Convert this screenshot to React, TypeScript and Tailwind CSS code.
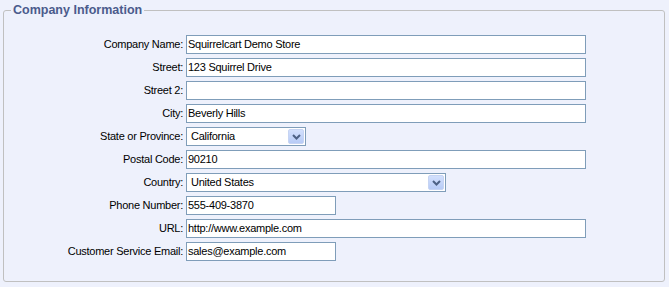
import React from "react";

type Field = {
  label: string;
  value: string;
  width: string;
  select?: boolean;
};

const fields: Field[] = [
  { label: "Company Name:", value: "Squirrelcart Demo Store", width: "w-[400px]" },
  { label: "Street:", value: "123 Squirrel Drive", width: "w-[400px]" },
  { label: "Street 2:", value: "", width: "w-[400px]" },
  { label: "City:", value: "Beverly Hills", width: "w-[400px]" },
  { label: "State or Province:", value: "California", width: "w-[120px]", select: true },
  { label: "Postal Code:", value: "90210", width: "w-[400px]" },
  { label: "Country:", value: "United States", width: "w-[260px]", select: true },
  { label: "Phone Number:", value: "555-409-3870", width: "w-[150px]" },
  { label: "URL:", value: "http://www.example.com", width: "w-[400px]" },
  { label: "Customer Service Email:", value: "sales@example.com", width: "w-[150px]" },
];

function DropButton() {
  return (
    <span className="flex items-center justify-center w-[16px] h-[15px] mr-[1px] rounded-[2px] bg-gradient-to-b from-[#d3e0fd] to-[#b7cbf6] border border-[#c6d4f3]">
      <svg width="9" height="6" viewBox="0 0 9 6">
        <polyline points="1,1 4.5,4.5 8,1" fill="none" stroke="#4d6185" strokeWidth="2" />
      </svg>
    </span>
  );
}

export default function App() {
  return (
    <div className="w-[669px] h-[287px] bg-[#eef1fc] pt-[2px] font-['Liberation_Sans',Arial,sans-serif] text-[11px] tracking-[-0.25px] text-black">
      <fieldset className="ml-[3px] mr-[4px] h-[280px] border border-[#c0c0c0] rounded-[3px] pl-[7px] pt-[17px] pb-[20px]">
        <legend className="px-[2px] pt-[1px] text-[12.5px] leading-[15px] tracking-normal font-bold text-[#4b5b8c]">
          Company Information
        </legend>
        <div className="flex flex-col gap-[4px]">
          {fields.map((f) => (
            <div key={f.label} className="flex items-center h-[19px]">
              <label className="w-[172px] mr-[3px] text-right whitespace-nowrap">{f.label}</label>
              {f.select ? (
                <div className={`${f.width} h-[19px] flex items-center justify-between border border-[#7f9db9] bg-white`}>
                  <span className="pl-[4px]">{f.value}</span>
                  <DropButton />
                </div>
              ) : (
                <div className={`${f.width} h-[19px] flex items-center border border-[#7f9db9] bg-white pl-[1px]`}>
                  {f.value}
                </div>
              )}
            </div>
          ))}
        </div>
      </fieldset>
    </div>
  );
}
